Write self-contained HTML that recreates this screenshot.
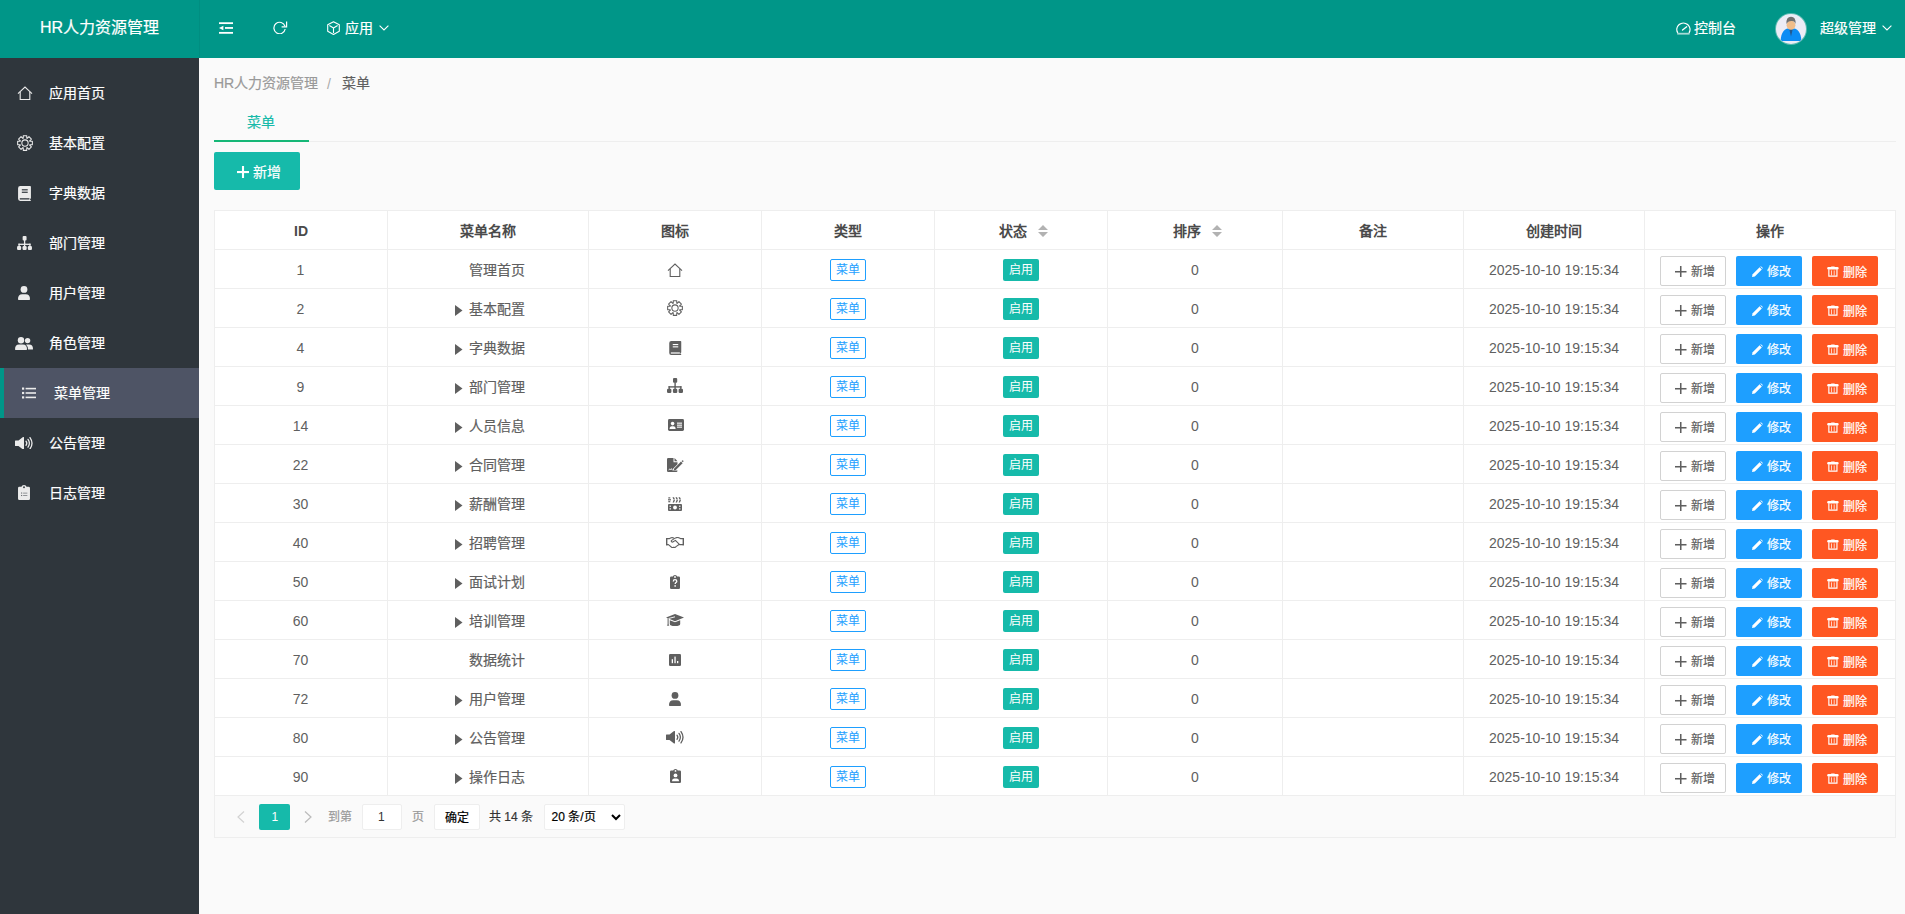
<!DOCTYPE html><html lang="zh-CN"><head><meta charset="utf-8"><style>html,body{margin:0;padding:0;width:1905px;height:914px;overflow:hidden;background:#fafafa;font-family:"Liberation Sans",sans-serif;}svg{display:block}</style></head><body><div style="position:absolute;left:0px;top:0px;width:1905px;height:58px;background:#009688;"></div>
<div style="position:absolute;left:199px;top:0px;width:1px;height:58px;background:rgba(0,0,0,0.05);"></div>
<div style="position:absolute;left:40px;top:19px;font-size:16px;line-height:18px;color:#fff;font-weight:normal;white-space:nowrap;-webkit-text-stroke:0.2px currentColor;">HR人力资源管理</div>
<svg style="position:absolute;left:219px;top:22px" width="14" height="12" viewBox="0 0 14 11.5" fill="#fff" ><rect x="0" y="0" width="14" height="1.8"/><rect x="6" y="4.8" width="8" height="1.8"/><rect x="0" y="9.7" width="14" height="1.8"/><path d="M0 5.7 L4.4 3.4 V8Z"/></svg>
<svg style="position:absolute;left:273px;top:21px" width="15" height="13" viewBox="0 0 15 13" fill="#fff" ><path d="M12 5.2 A5.7 5.7 0 1 0 12.2 8" fill="none" stroke="#fff" stroke-width="1.2"/><path d="M13.6 0.6 V5.8 H8.6" fill="none" stroke="#fff" stroke-width="1.2"/></svg>
<svg style="position:absolute;left:327px;top:20.5px" width="13" height="14" viewBox="0 0 13 14" fill="#fff" ><g fill="none" stroke="#fff" stroke-width="1.1" stroke-linejoin="round"><path d="M6.5 0.7 L12.3 3.8 V10.3 L6.5 13.4 L0.7 10.3 V3.8Z"/><path d="M2.4 4.6 L6.5 6.9 L10.6 4.6 M6.5 6.9 V12"/></g></svg>
<div style="position:absolute;left:345px;top:20px;font-size:14px;line-height:16px;color:#fff;font-weight:normal;white-space:nowrap;-webkit-text-stroke:0.2px currentColor;">应用</div>
<svg style="position:absolute;left:379px;top:24.5px" width="10" height="6" viewBox="0 0 10 6" fill="#fff" ><path d="M0.6 0.6 L5 5 L9.4 0.6" fill="none" stroke="#fff" stroke-width="1.1"/></svg>
<svg style="position:absolute;left:1676px;top:21.5px" width="15" height="13" viewBox="0 0 15 13" fill="#fff" ><path d="M1.74 10.9 A6.55 6.55 0 1 1 13.06 10.9" fill="none" stroke="#fff" stroke-width="1.3"/><rect x="1.2" y="10.8" width="12.4" height="1.8" fill="#fff" opacity="0.65"/><path d="M6.5 8.1 L10.7 4.8" stroke="#fff" stroke-width="1.3" stroke-linecap="round"/></svg>
<div style="position:absolute;left:1694px;top:20px;font-size:14px;line-height:16px;color:#fff;font-weight:normal;white-space:nowrap;-webkit-text-stroke:0.2px currentColor;">控制台</div>
<svg style="position:absolute;left:1774px;top:12px" width="34" height="34" viewBox="0 0 34 34"><circle cx="17" cy="17" r="16" fill="#fff" opacity="0.35"/><circle cx="17" cy="17" r="15" fill="#ececf6"/><clipPath id="av"><circle cx="17" cy="17" r="15"/></clipPath><g clip-path="url(#av)"><path d="M6.7 29 C6.7 20.5 10.5 16 17 16 C23.5 16 27.3 20.5 27.3 29Z" fill="#0b8cf4"/><path d="M15 16.3 L17 24.5 L19 16.3Z" fill="#24598f"/><ellipse cx="17" cy="13.2" rx="4.4" ry="4.5" fill="#f0bd8b"/><path d="M12.4 12 Q12 4.8 17 4.8 Q22 4.8 21.6 12 Q20.5 8.6 17.6 8.9 Q14.2 8.6 12.4 12Z" fill="#707070"/></g></svg>
<div style="position:absolute;left:1820px;top:19.5px;font-size:14px;line-height:16px;color:#fff;font-weight:normal;white-space:nowrap;-webkit-text-stroke:0.2px currentColor;">超级管理</div>
<svg style="position:absolute;left:1882px;top:25px" width="10" height="6" viewBox="0 0 10 6" fill="#fff" ><path d="M0.6 0.6 L5 5 L9.4 0.6" fill="none" stroke="#fff" stroke-width="1.1"/></svg>
<div style="position:absolute;left:0px;top:58px;width:199px;height:856px;background:#2f363c;"></div>
<svg style="position:absolute;left:16.5px;top:85.5px" width="16" height="14.5" viewBox="0 0 16 14.5" fill="#ebebeb" ><path d="M1 7.6 L8 1 L15 7.6" fill="none" stroke="#ebebeb" stroke-width="1.1" stroke-linejoin="miter"/><path d="M3.2 6 V13.5 H12.8 V6" fill="none" stroke="#ebebeb" stroke-width="1.1"/></svg>
<div style="position:absolute;left:49px;top:85px;font-size:14px;line-height:16px;color:#fff;font-weight:normal;white-space:nowrap;-webkit-text-stroke:0.2px currentColor;">应用首页</div>
<svg style="position:absolute;left:16.5px;top:135px" width="16" height="16" viewBox="0 0 16 16" fill="#ebebeb" ><path d="M6.25 3.21 L6.25 0.65 L9.75 0.65 L9.75 3.21 L10.15 3.38 L11.96 1.57 L14.43 4.04 L12.62 5.85 L12.79 6.25 L15.35 6.25 L15.35 9.75 L12.79 9.75 L12.62 10.15 L14.43 11.96 L11.96 14.43 L10.15 12.62 L9.75 12.79 L9.75 15.35 L6.25 15.35 L6.25 12.79 L5.85 12.62 L4.04 14.43 L1.57 11.96 L3.38 10.15 L3.21 9.75 L0.65 9.75 L0.65 6.25 L3.21 6.25 L3.38 5.85 L1.57 4.04 L4.04 1.57 L5.85 3.38Z" fill="none" stroke="#ebebeb" stroke-width="1.05" stroke-linejoin="round"/><circle cx="8" cy="8" r="3.15" fill="none" stroke="#ebebeb" stroke-width="1.05"/></svg>
<div style="position:absolute;left:49px;top:135px;font-size:14px;line-height:16px;color:#fff;font-weight:normal;white-space:nowrap;-webkit-text-stroke:0.2px currentColor;">基本配置</div>
<svg style="position:absolute;left:18px;top:185.5px" width="13" height="15" viewBox="0 0 12 14" fill="#ebebeb" ><path d="M2 0 H11.2 Q12 0 12 0.8 V11.2 Q12 12 11.2 12 V12.8 Q12 12.8 12 13.4 Q12 14 11.4 14 H2 Q0 14 0 12 V2 Q0 0 2 0Z" fill="#ebebeb"/><rect x="3.5" y="3" width="5.5" height="1.1" fill="#2f363c"/><rect x="3.5" y="5.3" width="5.5" height="1.1" fill="#2f363c"/><rect x="1.6" y="11.4" width="9" height="1.2" fill="#2f363c"/></svg>
<div style="position:absolute;left:49px;top:185px;font-size:14px;line-height:16px;color:#fff;font-weight:normal;white-space:nowrap;-webkit-text-stroke:0.2px currentColor;">字典数据</div>
<svg style="position:absolute;left:15.8px;top:235.5px" width="17" height="14" viewBox="0 0 16 15" fill="#ebebeb" ><rect x="6" y="0" width="4.2" height="4.8" rx="1.1" fill="#ebebeb"/><rect x="7.4" y="4.2" width="1.4" height="4.8" fill="#ebebeb"/><rect x="1.5" y="8.2" width="13" height="1.4" fill="#ebebeb"/><rect x="1.5" y="8.2" width="1.4" height="3" fill="#ebebeb"/><rect x="13.1" y="8.2" width="1.4" height="3" fill="#ebebeb"/><rect x="7.4" y="8.2" width="1.4" height="3" fill="#ebebeb"/><rect x="0" y="10.8" width="4.4" height="4.2" rx="1.2" fill="#ebebeb"/><rect x="5.9" y="10.8" width="4.4" height="4.2" rx="1.2" fill="#ebebeb"/><rect x="11.6" y="10.8" width="4.4" height="4.2" rx="1.2" fill="#ebebeb"/></svg>
<div style="position:absolute;left:49px;top:235px;font-size:14px;line-height:16px;color:#fff;font-weight:normal;white-space:nowrap;-webkit-text-stroke:0.2px currentColor;">部门管理</div>
<svg style="position:absolute;left:18px;top:286px" width="12" height="14" viewBox="0 0 12 14" fill="#ebebeb" ><circle cx="6" cy="3.4" r="3.4" fill="#ebebeb"/><path d="M0 13.2 Q0 8.2 4.2 8.2 H7.8 Q12 8.2 12 13.2 Q12 14 11.2 14 H0.8 Q0 14 0 13.2Z" fill="#ebebeb"/></svg>
<div style="position:absolute;left:49px;top:285px;font-size:14px;line-height:16px;color:#fff;font-weight:normal;white-space:nowrap;-webkit-text-stroke:0.2px currentColor;">用户管理</div>
<svg style="position:absolute;left:15px;top:336.5px" width="18" height="13" viewBox="0 0 18 13" fill="#ebebeb" ><circle cx="6" cy="3.3" r="3.2" fill="#ebebeb"/><path d="M0 12.3 Q0 7.6 4 7.6 H8 Q12 7.6 12 12.3 Q12 13 11.3 13 H0.7 Q0 13 0 12.3Z" fill="#ebebeb"/><circle cx="12.6" cy="3.6" r="2.7" fill="#ebebeb"/><path d="M11 7.6 H14 Q18 7.6 18 12 Q18 12.6 17.4 12.6 H13 Q13 9.5 11 7.6Z" fill="#ebebeb"/></svg>
<div style="position:absolute;left:49px;top:335px;font-size:14px;line-height:16px;color:#fff;font-weight:normal;white-space:nowrap;-webkit-text-stroke:0.2px currentColor;">角色管理</div>
<div style="position:absolute;left:0px;top:368px;width:199px;height:50px;background:#4e5465;"></div>
<div style="position:absolute;left:0px;top:368px;width:4px;height:50px;background:#009688;"></div>
<svg style="position:absolute;left:22px;top:387px" width="14" height="12" viewBox="0 0 14 11" fill="#ebebeb" ><rect x="0" y="0" width="2.2" height="2.2" fill="#ebebeb"/><rect x="0" y="4.4" width="2.2" height="2.2" fill="#ebebeb"/><rect x="0" y="8.8" width="2.2" height="2.2" fill="#ebebeb"/><rect x="3.6" y="0.3" width="10.4" height="1.6" fill="#ebebeb"/><rect x="3.6" y="4.7" width="10.4" height="1.6" fill="#ebebeb"/><rect x="3.6" y="9.1" width="10.4" height="1.6" fill="#ebebeb"/></svg>
<div style="position:absolute;left:54px;top:385px;font-size:14px;line-height:16px;color:#fff;font-weight:normal;white-space:nowrap;-webkit-text-stroke:0.2px currentColor;">菜单管理</div>
<svg style="position:absolute;left:15px;top:436.5px" width="18" height="12.5" viewBox="0 0 18 12.5" fill="#ebebeb" ><path d="M0 4 Q0 3.5 0.5 3.5 H3.5 L8 0 Q9 -0.3 9 0.8 V11.7 Q9 12.8 8 12.5 L3.5 9 H0.5 Q0 9 0 8.5Z" fill="#ebebeb"/><path d="M11 4.2 Q12.6 6.25 11 8.3" fill="none" stroke="#ebebeb" stroke-width="1.3" stroke-linecap="round"/><path d="M13 2.4 Q15.8 6.25 13 10.1" fill="none" stroke="#ebebeb" stroke-width="1.3" stroke-linecap="round"/><path d="M15 0.6 Q19 6.25 15 11.9" fill="none" stroke="#ebebeb" stroke-width="1.3" stroke-linecap="round"/></svg>
<div style="position:absolute;left:49px;top:435px;font-size:14px;line-height:16px;color:#fff;font-weight:normal;white-space:nowrap;-webkit-text-stroke:0.2px currentColor;">公告管理</div>
<svg style="position:absolute;left:18.2px;top:485.3px" width="12" height="15" viewBox="0 0 11.8 14.8" fill="#ebebeb" ><path d="M1.3 1.8 H3.4 Q3.8 0 5.9 0 Q8 0 8.4 1.8 H10.5 Q11.8 1.8 11.8 3.1 V13.5 Q11.8 14.8 10.5 14.8 H1.3 Q0 14.8 0 13.5 V3.1 Q0 1.8 1.3 1.8Z" fill="#ebebeb"/><circle cx="5.9" cy="2.2" r="0.9" fill="#2f363c"/><rect x="3" y="7.4" width="1.1" height="1.1" fill="#2f363c" opacity="0.7"/><rect x="5" y="7.6" width="4.2" height="0.8" fill="#2f363c" opacity="0.6"/><rect x="3" y="9.8" width="1.1" height="1.1" fill="#2f363c" opacity="0.7"/><rect x="5" y="10" width="4.2" height="0.8" fill="#2f363c" opacity="0.6"/></svg>
<div style="position:absolute;left:49px;top:485px;font-size:14px;line-height:16px;color:#fff;font-weight:normal;white-space:nowrap;-webkit-text-stroke:0.2px currentColor;">日志管理</div>
<div style="position:absolute;left:199px;top:58px;width:1706px;height:856px;background:#fafafa;"></div>
<div style="position:absolute;left:214px;top:75px;font-size:14px;line-height:16px;color:#999;font-weight:normal;white-space:nowrap;-webkit-text-stroke:0.2px currentColor;">HR人力资源管理</div>
<div style="position:absolute;left:327px;top:75.5px;font-size:14px;line-height:16px;color:#aaa;font-weight:normal;white-space:nowrap;">/</div>
<div style="position:absolute;left:342px;top:75px;font-size:14px;line-height:16px;color:#5f5f5f;font-weight:normal;white-space:nowrap;-webkit-text-stroke:0.2px currentColor;">菜单</div>
<div style="position:absolute;left:247px;top:114px;font-size:14px;line-height:16px;color:#16baaa;font-weight:normal;white-space:nowrap;-webkit-text-stroke:0.2px currentColor;">菜单</div>
<div style="position:absolute;left:214px;top:141px;width:1682px;height:1px;background:#eeeeee;"></div>
<div style="position:absolute;left:214px;top:139.5px;width:95px;height:2px;background:#16b777;"></div>
<div style="position:absolute;left:214px;top:152px;width:86px;height:38px;background:#16baaa;border-radius:2px"></div>
<svg style="position:absolute;left:237px;top:166px" width="12" height="12" viewBox="0 0 12 12" fill="#fff" ><rect x="0" y="5" width="12" height="2.1" fill="#fff"/><rect x="4.95" y="0" width="2.1" height="12" fill="#fff"/></svg>
<div style="position:absolute;left:253px;top:164px;font-size:14px;line-height:16px;color:#fff;font-weight:normal;white-space:nowrap;-webkit-text-stroke:0.2px currentColor;">新增</div>
<div style="position:absolute;left:214px;top:210px;width:1682px;height:628px;background:#fff;"></div>
<div style="position:absolute;left:214px;top:210px;width:1682px;height:1px;background:#eeeeee;"></div>
<div style="position:absolute;left:214px;top:249px;width:1682px;height:1px;background:#eeeeee;"></div>
<div style="position:absolute;left:214px;top:288px;width:1682px;height:1px;background:#eeeeee;"></div>
<div style="position:absolute;left:214px;top:327px;width:1682px;height:1px;background:#eeeeee;"></div>
<div style="position:absolute;left:214px;top:366px;width:1682px;height:1px;background:#eeeeee;"></div>
<div style="position:absolute;left:214px;top:405px;width:1682px;height:1px;background:#eeeeee;"></div>
<div style="position:absolute;left:214px;top:444px;width:1682px;height:1px;background:#eeeeee;"></div>
<div style="position:absolute;left:214px;top:483px;width:1682px;height:1px;background:#eeeeee;"></div>
<div style="position:absolute;left:214px;top:522px;width:1682px;height:1px;background:#eeeeee;"></div>
<div style="position:absolute;left:214px;top:561px;width:1682px;height:1px;background:#eeeeee;"></div>
<div style="position:absolute;left:214px;top:600px;width:1682px;height:1px;background:#eeeeee;"></div>
<div style="position:absolute;left:214px;top:639px;width:1682px;height:1px;background:#eeeeee;"></div>
<div style="position:absolute;left:214px;top:678px;width:1682px;height:1px;background:#eeeeee;"></div>
<div style="position:absolute;left:214px;top:717px;width:1682px;height:1px;background:#eeeeee;"></div>
<div style="position:absolute;left:214px;top:756px;width:1682px;height:1px;background:#eeeeee;"></div>
<div style="position:absolute;left:214px;top:795px;width:1682px;height:1px;background:#eeeeee;"></div>
<div style="position:absolute;left:214px;top:210px;width:1px;height:586px;background:#eeeeee;"></div>
<div style="position:absolute;left:387px;top:210px;width:1px;height:586px;background:#eeeeee;"></div>
<div style="position:absolute;left:588px;top:210px;width:1px;height:586px;background:#eeeeee;"></div>
<div style="position:absolute;left:761px;top:210px;width:1px;height:586px;background:#eeeeee;"></div>
<div style="position:absolute;left:934px;top:210px;width:1px;height:586px;background:#eeeeee;"></div>
<div style="position:absolute;left:1107px;top:210px;width:1px;height:586px;background:#eeeeee;"></div>
<div style="position:absolute;left:1282px;top:210px;width:1px;height:586px;background:#eeeeee;"></div>
<div style="position:absolute;left:1463px;top:210px;width:1px;height:586px;background:#eeeeee;"></div>
<div style="position:absolute;left:1644px;top:210px;width:1px;height:586px;background:#eeeeee;"></div>
<div style="position:absolute;left:1895px;top:210px;width:1px;height:586px;background:#eeeeee;"></div>
<div style="position:absolute;left:214px;top:796px;width:1682px;height:41px;background:#fafafa;"></div>
<div style="position:absolute;left:214px;top:837px;width:1682px;height:1px;background:#eeeeee;"></div>
<div style="position:absolute;left:214px;top:796px;width:1px;height:42px;background:#eeeeee;"></div>
<div style="position:absolute;left:1895px;top:796px;width:1px;height:42px;background:#eeeeee;"></div>
<div style="position:absolute;left:294.0px;top:223px;font-size:14px;line-height:16px;color:#4a4a4a;font-weight:bold;white-space:nowrap;">ID</div>
<div style="position:absolute;left:460.0px;top:223px;font-size:14px;line-height:16px;color:#4a4a4a;font-weight:bold;white-space:nowrap;">菜单名称</div>
<div style="position:absolute;left:661.0px;top:223px;font-size:14px;line-height:16px;color:#4a4a4a;font-weight:bold;white-space:nowrap;">图标</div>
<div style="position:absolute;left:834.0px;top:223px;font-size:14px;line-height:16px;color:#4a4a4a;font-weight:bold;white-space:nowrap;">类型</div>
<div style="position:absolute;left:999.0px;top:223px;font-size:14px;line-height:16px;color:#4a4a4a;font-weight:bold;white-space:nowrap;">状态</div>
<svg style="position:absolute;left:1038.0px;top:225px" width="10" height="12" viewBox="0 0 10 12"><path d="M5 0 L10 5 H0Z M5 12 L10 7 H0Z" fill="#b2b2b2"/></svg>
<div style="position:absolute;left:1173.0px;top:223px;font-size:14px;line-height:16px;color:#4a4a4a;font-weight:bold;white-space:nowrap;">排序</div>
<svg style="position:absolute;left:1212.0px;top:225px" width="10" height="12" viewBox="0 0 10 12"><path d="M5 0 L10 5 H0Z M5 12 L10 7 H0Z" fill="#b2b2b2"/></svg>
<div style="position:absolute;left:1359.0px;top:223px;font-size:14px;line-height:16px;color:#4a4a4a;font-weight:bold;white-space:nowrap;">备注</div>
<div style="position:absolute;left:1526.0px;top:223px;font-size:14px;line-height:16px;color:#4a4a4a;font-weight:bold;white-space:nowrap;">创建时间</div>
<div style="position:absolute;left:1756.0px;top:223px;font-size:14px;line-height:16px;color:#4a4a4a;font-weight:bold;white-space:nowrap;">操作</div>
<div style="position:absolute;left:296.6px;top:262px;font-size:14px;line-height:16px;color:#5f5f5f;font-weight:normal;white-space:nowrap;">1</div>
<div style="position:absolute;left:469px;top:262px;font-size:14px;line-height:16px;color:#5f5f5f;font-weight:normal;white-space:nowrap;-webkit-text-stroke:0.2px currentColor;">管理首页</div>
<svg style="position:absolute;left:667px;top:262.5px" width="16" height="14.5" viewBox="0 0 16 14.5" fill="#5f5f5f" ><path d="M1 7.6 L8 1 L15 7.6" fill="none" stroke="#5f5f5f" stroke-width="1.1" stroke-linejoin="miter"/><path d="M3.2 6 V13.5 H12.8 V6" fill="none" stroke="#5f5f5f" stroke-width="1.1"/></svg>
<div style="position:absolute;left:830px;top:259px;width:34px;height:20px;border:1px solid #1e9fff;border-radius:2px;color:#1e9fff;font-size:12px;line-height:21px;text-align:center;white-space:nowrap">菜单</div>
<div style="position:absolute;left:1003px;top:259px;width:36px;height:22px;background:#16baaa;border-radius:2px;color:#fff;font-size:12px;line-height:23px;text-align:center;white-space:nowrap">启用</div>
<div style="position:absolute;left:1191px;top:262px;font-size:14px;line-height:16px;color:#5f5f5f;font-weight:normal;white-space:nowrap;">0</div>
<div style="position:absolute;left:1489px;top:262px;font-size:14px;line-height:16px;color:#5f5f5f;font-weight:normal;white-space:nowrap;">2025-10-10 19:15:34</div>
<div style="position:absolute;left:1660px;top:256px;width:64px;height:28px;border:1px solid #d2d2d2;border-radius:2px;background:#fff"></div>
<svg style="position:absolute;left:1675px;top:265.5px" width="11.5" height="11.5" viewBox="0 0 12 12" fill="#5f5f5f" ><rect x="0" y="5.2" width="12" height="1.6" fill="#5f5f5f"/><rect x="5.2" y="0" width="1.6" height="12" fill="#5f5f5f"/></svg>
<div style="position:absolute;left:1690.5px;top:265px;font-size:12px;line-height:14px;color:#5f5f5f;font-weight:normal;white-space:nowrap;-webkit-text-stroke:0.2px currentColor;">新增</div>
<div style="position:absolute;left:1736px;top:256px;width:66px;height:30px;background:#1e9fff;border-radius:2px"></div>
<svg style="position:absolute;left:1752px;top:266.2px" width="11" height="11" viewBox="0 0 11 11" fill="#fff" ><path d="M0 11 L0.6 8.2 L7.6 1.2 L9.8 3.4 L2.8 10.4Z" fill="#fff"/><path d="M8.4 0.4 Q8.8 0 9.2 0.4 L10.6 1.8 Q11 2.2 10.6 2.6 L10.4 2.8 L8.2 0.6Z" fill="#fff"/></svg>
<div style="position:absolute;left:1767px;top:265px;font-size:12px;line-height:14px;color:#fff;font-weight:normal;white-space:nowrap;-webkit-text-stroke:0.2px currentColor;">修改</div>
<div style="position:absolute;left:1812px;top:256px;width:66px;height:30px;background:#ff5722;border-radius:2px"></div>
<svg style="position:absolute;left:1827px;top:265.8px" width="12" height="11" viewBox="0 0 12 11" fill="#fff" ><rect x="0.2" y="0.9" width="11.4" height="2.6" rx="1.2" fill="#fff"/><rect x="4" y="0.4" width="3.8" height="1" rx="0.5" fill="#fff"/><path d="M1.85 3.2 V10.05 H9.95 V3.2" fill="none" stroke="#fff" stroke-width="1.15"/><rect x="4.1" y="4.4" width="0.85" height="5" fill="#fff" opacity="0.85"/><rect x="6.75" y="4.4" width="0.85" height="5" fill="#fff" opacity="0.85"/></svg>
<div style="position:absolute;left:1842.5px;top:265.5px;font-size:12px;line-height:14px;color:#fff;font-weight:normal;white-space:nowrap;-webkit-text-stroke:0.2px currentColor;">删除</div>
<div style="position:absolute;left:296.6px;top:301px;font-size:14px;line-height:16px;color:#5f5f5f;font-weight:normal;white-space:nowrap;">2</div>
<svg style="position:absolute;left:455px;top:304.5px" width="8" height="11" viewBox="0 0 8 11"><path d="M0 0 L7.5 5.5 L0 11Z" fill="#5f5f5f"/></svg>
<div style="position:absolute;left:469px;top:301px;font-size:14px;line-height:16px;color:#5f5f5f;font-weight:normal;white-space:nowrap;-webkit-text-stroke:0.2px currentColor;">基本配置</div>
<svg style="position:absolute;left:667px;top:300px" width="16" height="16" viewBox="0 0 16 16" fill="#5f5f5f" ><path d="M6.25 3.21 L6.25 0.65 L9.75 0.65 L9.75 3.21 L10.15 3.38 L11.96 1.57 L14.43 4.04 L12.62 5.85 L12.79 6.25 L15.35 6.25 L15.35 9.75 L12.79 9.75 L12.62 10.15 L14.43 11.96 L11.96 14.43 L10.15 12.62 L9.75 12.79 L9.75 15.35 L6.25 15.35 L6.25 12.79 L5.85 12.62 L4.04 14.43 L1.57 11.96 L3.38 10.15 L3.21 9.75 L0.65 9.75 L0.65 6.25 L3.21 6.25 L3.38 5.85 L1.57 4.04 L4.04 1.57 L5.85 3.38Z" fill="none" stroke="#5f5f5f" stroke-width="1.05" stroke-linejoin="round"/><circle cx="8" cy="8" r="3.15" fill="none" stroke="#5f5f5f" stroke-width="1.05"/></svg>
<div style="position:absolute;left:830px;top:298px;width:34px;height:20px;border:1px solid #1e9fff;border-radius:2px;color:#1e9fff;font-size:12px;line-height:21px;text-align:center;white-space:nowrap">菜单</div>
<div style="position:absolute;left:1003px;top:298px;width:36px;height:22px;background:#16baaa;border-radius:2px;color:#fff;font-size:12px;line-height:23px;text-align:center;white-space:nowrap">启用</div>
<div style="position:absolute;left:1191px;top:301px;font-size:14px;line-height:16px;color:#5f5f5f;font-weight:normal;white-space:nowrap;">0</div>
<div style="position:absolute;left:1489px;top:301px;font-size:14px;line-height:16px;color:#5f5f5f;font-weight:normal;white-space:nowrap;">2025-10-10 19:15:34</div>
<div style="position:absolute;left:1660px;top:295px;width:64px;height:28px;border:1px solid #d2d2d2;border-radius:2px;background:#fff"></div>
<svg style="position:absolute;left:1675px;top:304.5px" width="11.5" height="11.5" viewBox="0 0 12 12" fill="#5f5f5f" ><rect x="0" y="5.2" width="12" height="1.6" fill="#5f5f5f"/><rect x="5.2" y="0" width="1.6" height="12" fill="#5f5f5f"/></svg>
<div style="position:absolute;left:1690.5px;top:304px;font-size:12px;line-height:14px;color:#5f5f5f;font-weight:normal;white-space:nowrap;-webkit-text-stroke:0.2px currentColor;">新增</div>
<div style="position:absolute;left:1736px;top:295px;width:66px;height:30px;background:#1e9fff;border-radius:2px"></div>
<svg style="position:absolute;left:1752px;top:305.2px" width="11" height="11" viewBox="0 0 11 11" fill="#fff" ><path d="M0 11 L0.6 8.2 L7.6 1.2 L9.8 3.4 L2.8 10.4Z" fill="#fff"/><path d="M8.4 0.4 Q8.8 0 9.2 0.4 L10.6 1.8 Q11 2.2 10.6 2.6 L10.4 2.8 L8.2 0.6Z" fill="#fff"/></svg>
<div style="position:absolute;left:1767px;top:304px;font-size:12px;line-height:14px;color:#fff;font-weight:normal;white-space:nowrap;-webkit-text-stroke:0.2px currentColor;">修改</div>
<div style="position:absolute;left:1812px;top:295px;width:66px;height:30px;background:#ff5722;border-radius:2px"></div>
<svg style="position:absolute;left:1827px;top:304.8px" width="12" height="11" viewBox="0 0 12 11" fill="#fff" ><rect x="0.2" y="0.9" width="11.4" height="2.6" rx="1.2" fill="#fff"/><rect x="4" y="0.4" width="3.8" height="1" rx="0.5" fill="#fff"/><path d="M1.85 3.2 V10.05 H9.95 V3.2" fill="none" stroke="#fff" stroke-width="1.15"/><rect x="4.1" y="4.4" width="0.85" height="5" fill="#fff" opacity="0.85"/><rect x="6.75" y="4.4" width="0.85" height="5" fill="#fff" opacity="0.85"/></svg>
<div style="position:absolute;left:1842.5px;top:304.5px;font-size:12px;line-height:14px;color:#fff;font-weight:normal;white-space:nowrap;-webkit-text-stroke:0.2px currentColor;">删除</div>
<div style="position:absolute;left:296.6px;top:340px;font-size:14px;line-height:16px;color:#5f5f5f;font-weight:normal;white-space:nowrap;">4</div>
<svg style="position:absolute;left:455px;top:343.5px" width="8" height="11" viewBox="0 0 8 11"><path d="M0 0 L7.5 5.5 L0 11Z" fill="#5f5f5f"/></svg>
<div style="position:absolute;left:469px;top:340px;font-size:14px;line-height:16px;color:#5f5f5f;font-weight:normal;white-space:nowrap;-webkit-text-stroke:0.2px currentColor;">字典数据</div>
<svg style="position:absolute;left:669px;top:340.5px" width="12.5" height="14" viewBox="0 0 12 14" fill="#5f5f5f" ><path d="M2 0 H11.2 Q12 0 12 0.8 V11.2 Q12 12 11.2 12 V12.8 Q12 12.8 12 13.4 Q12 14 11.4 14 H2 Q0 14 0 12 V2 Q0 0 2 0Z" fill="#5f5f5f"/><rect x="3.5" y="3" width="5.5" height="1.1" fill="#fff"/><rect x="3.5" y="5.3" width="5.5" height="1.1" fill="#fff"/><rect x="1.6" y="11.4" width="9" height="1.2" fill="#fff"/></svg>
<div style="position:absolute;left:830px;top:337px;width:34px;height:20px;border:1px solid #1e9fff;border-radius:2px;color:#1e9fff;font-size:12px;line-height:21px;text-align:center;white-space:nowrap">菜单</div>
<div style="position:absolute;left:1003px;top:337px;width:36px;height:22px;background:#16baaa;border-radius:2px;color:#fff;font-size:12px;line-height:23px;text-align:center;white-space:nowrap">启用</div>
<div style="position:absolute;left:1191px;top:340px;font-size:14px;line-height:16px;color:#5f5f5f;font-weight:normal;white-space:nowrap;">0</div>
<div style="position:absolute;left:1489px;top:340px;font-size:14px;line-height:16px;color:#5f5f5f;font-weight:normal;white-space:nowrap;">2025-10-10 19:15:34</div>
<div style="position:absolute;left:1660px;top:334px;width:64px;height:28px;border:1px solid #d2d2d2;border-radius:2px;background:#fff"></div>
<svg style="position:absolute;left:1675px;top:343.5px" width="11.5" height="11.5" viewBox="0 0 12 12" fill="#5f5f5f" ><rect x="0" y="5.2" width="12" height="1.6" fill="#5f5f5f"/><rect x="5.2" y="0" width="1.6" height="12" fill="#5f5f5f"/></svg>
<div style="position:absolute;left:1690.5px;top:343px;font-size:12px;line-height:14px;color:#5f5f5f;font-weight:normal;white-space:nowrap;-webkit-text-stroke:0.2px currentColor;">新增</div>
<div style="position:absolute;left:1736px;top:334px;width:66px;height:30px;background:#1e9fff;border-radius:2px"></div>
<svg style="position:absolute;left:1752px;top:344.2px" width="11" height="11" viewBox="0 0 11 11" fill="#fff" ><path d="M0 11 L0.6 8.2 L7.6 1.2 L9.8 3.4 L2.8 10.4Z" fill="#fff"/><path d="M8.4 0.4 Q8.8 0 9.2 0.4 L10.6 1.8 Q11 2.2 10.6 2.6 L10.4 2.8 L8.2 0.6Z" fill="#fff"/></svg>
<div style="position:absolute;left:1767px;top:343px;font-size:12px;line-height:14px;color:#fff;font-weight:normal;white-space:nowrap;-webkit-text-stroke:0.2px currentColor;">修改</div>
<div style="position:absolute;left:1812px;top:334px;width:66px;height:30px;background:#ff5722;border-radius:2px"></div>
<svg style="position:absolute;left:1827px;top:343.8px" width="12" height="11" viewBox="0 0 12 11" fill="#fff" ><rect x="0.2" y="0.9" width="11.4" height="2.6" rx="1.2" fill="#fff"/><rect x="4" y="0.4" width="3.8" height="1" rx="0.5" fill="#fff"/><path d="M1.85 3.2 V10.05 H9.95 V3.2" fill="none" stroke="#fff" stroke-width="1.15"/><rect x="4.1" y="4.4" width="0.85" height="5" fill="#fff" opacity="0.85"/><rect x="6.75" y="4.4" width="0.85" height="5" fill="#fff" opacity="0.85"/></svg>
<div style="position:absolute;left:1842.5px;top:343.5px;font-size:12px;line-height:14px;color:#fff;font-weight:normal;white-space:nowrap;-webkit-text-stroke:0.2px currentColor;">删除</div>
<div style="position:absolute;left:296.6px;top:379px;font-size:14px;line-height:16px;color:#5f5f5f;font-weight:normal;white-space:nowrap;">9</div>
<svg style="position:absolute;left:455px;top:382.5px" width="8" height="11" viewBox="0 0 8 11"><path d="M0 0 L7.5 5.5 L0 11Z" fill="#5f5f5f"/></svg>
<div style="position:absolute;left:469px;top:379px;font-size:14px;line-height:16px;color:#5f5f5f;font-weight:normal;white-space:nowrap;-webkit-text-stroke:0.2px currentColor;">部门管理</div>
<svg style="position:absolute;left:667px;top:377.5px" width="16" height="15" viewBox="0 0 16 15" fill="#5f5f5f" ><rect x="6" y="0" width="4.2" height="4.8" rx="1.1" fill="#5f5f5f"/><rect x="7.4" y="4.2" width="1.4" height="4.8" fill="#5f5f5f"/><rect x="1.5" y="8.2" width="13" height="1.4" fill="#5f5f5f"/><rect x="1.5" y="8.2" width="1.4" height="3" fill="#5f5f5f"/><rect x="13.1" y="8.2" width="1.4" height="3" fill="#5f5f5f"/><rect x="7.4" y="8.2" width="1.4" height="3" fill="#5f5f5f"/><rect x="0" y="10.8" width="4.4" height="4.2" rx="1.2" fill="#5f5f5f"/><rect x="5.9" y="10.8" width="4.4" height="4.2" rx="1.2" fill="#5f5f5f"/><rect x="11.6" y="10.8" width="4.4" height="4.2" rx="1.2" fill="#5f5f5f"/></svg>
<div style="position:absolute;left:830px;top:376px;width:34px;height:20px;border:1px solid #1e9fff;border-radius:2px;color:#1e9fff;font-size:12px;line-height:21px;text-align:center;white-space:nowrap">菜单</div>
<div style="position:absolute;left:1003px;top:376px;width:36px;height:22px;background:#16baaa;border-radius:2px;color:#fff;font-size:12px;line-height:23px;text-align:center;white-space:nowrap">启用</div>
<div style="position:absolute;left:1191px;top:379px;font-size:14px;line-height:16px;color:#5f5f5f;font-weight:normal;white-space:nowrap;">0</div>
<div style="position:absolute;left:1489px;top:379px;font-size:14px;line-height:16px;color:#5f5f5f;font-weight:normal;white-space:nowrap;">2025-10-10 19:15:34</div>
<div style="position:absolute;left:1660px;top:373px;width:64px;height:28px;border:1px solid #d2d2d2;border-radius:2px;background:#fff"></div>
<svg style="position:absolute;left:1675px;top:382.5px" width="11.5" height="11.5" viewBox="0 0 12 12" fill="#5f5f5f" ><rect x="0" y="5.2" width="12" height="1.6" fill="#5f5f5f"/><rect x="5.2" y="0" width="1.6" height="12" fill="#5f5f5f"/></svg>
<div style="position:absolute;left:1690.5px;top:382px;font-size:12px;line-height:14px;color:#5f5f5f;font-weight:normal;white-space:nowrap;-webkit-text-stroke:0.2px currentColor;">新增</div>
<div style="position:absolute;left:1736px;top:373px;width:66px;height:30px;background:#1e9fff;border-radius:2px"></div>
<svg style="position:absolute;left:1752px;top:383.2px" width="11" height="11" viewBox="0 0 11 11" fill="#fff" ><path d="M0 11 L0.6 8.2 L7.6 1.2 L9.8 3.4 L2.8 10.4Z" fill="#fff"/><path d="M8.4 0.4 Q8.8 0 9.2 0.4 L10.6 1.8 Q11 2.2 10.6 2.6 L10.4 2.8 L8.2 0.6Z" fill="#fff"/></svg>
<div style="position:absolute;left:1767px;top:382px;font-size:12px;line-height:14px;color:#fff;font-weight:normal;white-space:nowrap;-webkit-text-stroke:0.2px currentColor;">修改</div>
<div style="position:absolute;left:1812px;top:373px;width:66px;height:30px;background:#ff5722;border-radius:2px"></div>
<svg style="position:absolute;left:1827px;top:382.8px" width="12" height="11" viewBox="0 0 12 11" fill="#fff" ><rect x="0.2" y="0.9" width="11.4" height="2.6" rx="1.2" fill="#fff"/><rect x="4" y="0.4" width="3.8" height="1" rx="0.5" fill="#fff"/><path d="M1.85 3.2 V10.05 H9.95 V3.2" fill="none" stroke="#fff" stroke-width="1.15"/><rect x="4.1" y="4.4" width="0.85" height="5" fill="#fff" opacity="0.85"/><rect x="6.75" y="4.4" width="0.85" height="5" fill="#fff" opacity="0.85"/></svg>
<div style="position:absolute;left:1842.5px;top:382.5px;font-size:12px;line-height:14px;color:#fff;font-weight:normal;white-space:nowrap;-webkit-text-stroke:0.2px currentColor;">删除</div>
<div style="position:absolute;left:292.7px;top:418px;font-size:14px;line-height:16px;color:#5f5f5f;font-weight:normal;white-space:nowrap;">14</div>
<svg style="position:absolute;left:455px;top:421.5px" width="8" height="11" viewBox="0 0 8 11"><path d="M0 0 L7.5 5.5 L0 11Z" fill="#5f5f5f"/></svg>
<div style="position:absolute;left:469px;top:418px;font-size:14px;line-height:16px;color:#5f5f5f;font-weight:normal;white-space:nowrap;-webkit-text-stroke:0.2px currentColor;">人员信息</div>
<svg style="position:absolute;left:667.5px;top:419px" width="16" height="12" viewBox="0 0 16 12" fill="#5f5f5f" ><rect x="0" y="0" width="16" height="12" rx="1.4" fill="#5f5f5f"/><circle cx="4.6" cy="4.6" r="1.8" fill="#fff"/><path d="M1.6 10 Q1.6 7.2 3.8 7.2 H5.4 Q7.6 7.2 7.6 10Z" fill="#fff"/><rect x="9" y="3.6" width="5" height="1.1" fill="#fff"/><rect x="9" y="5.6" width="5" height="1.1" fill="#fff"/><rect x="9" y="7.6" width="5" height="1.1" fill="#fff"/></svg>
<div style="position:absolute;left:830px;top:415px;width:34px;height:20px;border:1px solid #1e9fff;border-radius:2px;color:#1e9fff;font-size:12px;line-height:21px;text-align:center;white-space:nowrap">菜单</div>
<div style="position:absolute;left:1003px;top:415px;width:36px;height:22px;background:#16baaa;border-radius:2px;color:#fff;font-size:12px;line-height:23px;text-align:center;white-space:nowrap">启用</div>
<div style="position:absolute;left:1191px;top:418px;font-size:14px;line-height:16px;color:#5f5f5f;font-weight:normal;white-space:nowrap;">0</div>
<div style="position:absolute;left:1489px;top:418px;font-size:14px;line-height:16px;color:#5f5f5f;font-weight:normal;white-space:nowrap;">2025-10-10 19:15:34</div>
<div style="position:absolute;left:1660px;top:412px;width:64px;height:28px;border:1px solid #d2d2d2;border-radius:2px;background:#fff"></div>
<svg style="position:absolute;left:1675px;top:421.5px" width="11.5" height="11.5" viewBox="0 0 12 12" fill="#5f5f5f" ><rect x="0" y="5.2" width="12" height="1.6" fill="#5f5f5f"/><rect x="5.2" y="0" width="1.6" height="12" fill="#5f5f5f"/></svg>
<div style="position:absolute;left:1690.5px;top:421px;font-size:12px;line-height:14px;color:#5f5f5f;font-weight:normal;white-space:nowrap;-webkit-text-stroke:0.2px currentColor;">新增</div>
<div style="position:absolute;left:1736px;top:412px;width:66px;height:30px;background:#1e9fff;border-radius:2px"></div>
<svg style="position:absolute;left:1752px;top:422.2px" width="11" height="11" viewBox="0 0 11 11" fill="#fff" ><path d="M0 11 L0.6 8.2 L7.6 1.2 L9.8 3.4 L2.8 10.4Z" fill="#fff"/><path d="M8.4 0.4 Q8.8 0 9.2 0.4 L10.6 1.8 Q11 2.2 10.6 2.6 L10.4 2.8 L8.2 0.6Z" fill="#fff"/></svg>
<div style="position:absolute;left:1767px;top:421px;font-size:12px;line-height:14px;color:#fff;font-weight:normal;white-space:nowrap;-webkit-text-stroke:0.2px currentColor;">修改</div>
<div style="position:absolute;left:1812px;top:412px;width:66px;height:30px;background:#ff5722;border-radius:2px"></div>
<svg style="position:absolute;left:1827px;top:421.8px" width="12" height="11" viewBox="0 0 12 11" fill="#fff" ><rect x="0.2" y="0.9" width="11.4" height="2.6" rx="1.2" fill="#fff"/><rect x="4" y="0.4" width="3.8" height="1" rx="0.5" fill="#fff"/><path d="M1.85 3.2 V10.05 H9.95 V3.2" fill="none" stroke="#fff" stroke-width="1.15"/><rect x="4.1" y="4.4" width="0.85" height="5" fill="#fff" opacity="0.85"/><rect x="6.75" y="4.4" width="0.85" height="5" fill="#fff" opacity="0.85"/></svg>
<div style="position:absolute;left:1842.5px;top:421.5px;font-size:12px;line-height:14px;color:#fff;font-weight:normal;white-space:nowrap;-webkit-text-stroke:0.2px currentColor;">删除</div>
<div style="position:absolute;left:292.7px;top:457px;font-size:14px;line-height:16px;color:#5f5f5f;font-weight:normal;white-space:nowrap;">22</div>
<svg style="position:absolute;left:455px;top:460.5px" width="8" height="11" viewBox="0 0 8 11"><path d="M0 0 L7.5 5.5 L0 11Z" fill="#5f5f5f"/></svg>
<div style="position:absolute;left:469px;top:457px;font-size:14px;line-height:16px;color:#5f5f5f;font-weight:normal;white-space:nowrap;-webkit-text-stroke:0.2px currentColor;">合同管理</div>
<svg style="position:absolute;left:667px;top:458px" width="17" height="14" viewBox="0 0 17 14" fill="#5f5f5f" ><path d="M1.2 0 H6.5 V4.2 H10.5 V6.2 L6 10.8 L5.4 12.4 H10.5 V12.8 Q10.5 14 9.3 14 H1.2 Q0 14 0 12.8 V1.2 Q0 0 1.2 0Z" fill="#5f5f5f"/><path d="M7.5 0 L10.5 3.2 H7.5Z" fill="#5f5f5f"/><path d="M1.8 12.2 L2.8 10.8 L3.6 11.8 L4.5 10.6 L5 12" fill="none" stroke="#fff" stroke-width="0.8"/><path d="M7.2 10.4 L14 3.6 L15.6 5.2 L8.8 12 L6.6 12.6Z" fill="#5f5f5f"/><path d="M14.6 3 L15.2 2.4 Q15.6 2 16 2.4 L16.4 2.8 Q16.8 3.2 16.4 3.6 L15.8 4.2Z" fill="#5f5f5f"/></svg>
<div style="position:absolute;left:830px;top:454px;width:34px;height:20px;border:1px solid #1e9fff;border-radius:2px;color:#1e9fff;font-size:12px;line-height:21px;text-align:center;white-space:nowrap">菜单</div>
<div style="position:absolute;left:1003px;top:454px;width:36px;height:22px;background:#16baaa;border-radius:2px;color:#fff;font-size:12px;line-height:23px;text-align:center;white-space:nowrap">启用</div>
<div style="position:absolute;left:1191px;top:457px;font-size:14px;line-height:16px;color:#5f5f5f;font-weight:normal;white-space:nowrap;">0</div>
<div style="position:absolute;left:1489px;top:457px;font-size:14px;line-height:16px;color:#5f5f5f;font-weight:normal;white-space:nowrap;">2025-10-10 19:15:34</div>
<div style="position:absolute;left:1660px;top:451px;width:64px;height:28px;border:1px solid #d2d2d2;border-radius:2px;background:#fff"></div>
<svg style="position:absolute;left:1675px;top:460.5px" width="11.5" height="11.5" viewBox="0 0 12 12" fill="#5f5f5f" ><rect x="0" y="5.2" width="12" height="1.6" fill="#5f5f5f"/><rect x="5.2" y="0" width="1.6" height="12" fill="#5f5f5f"/></svg>
<div style="position:absolute;left:1690.5px;top:460px;font-size:12px;line-height:14px;color:#5f5f5f;font-weight:normal;white-space:nowrap;-webkit-text-stroke:0.2px currentColor;">新增</div>
<div style="position:absolute;left:1736px;top:451px;width:66px;height:30px;background:#1e9fff;border-radius:2px"></div>
<svg style="position:absolute;left:1752px;top:461.2px" width="11" height="11" viewBox="0 0 11 11" fill="#fff" ><path d="M0 11 L0.6 8.2 L7.6 1.2 L9.8 3.4 L2.8 10.4Z" fill="#fff"/><path d="M8.4 0.4 Q8.8 0 9.2 0.4 L10.6 1.8 Q11 2.2 10.6 2.6 L10.4 2.8 L8.2 0.6Z" fill="#fff"/></svg>
<div style="position:absolute;left:1767px;top:460px;font-size:12px;line-height:14px;color:#fff;font-weight:normal;white-space:nowrap;-webkit-text-stroke:0.2px currentColor;">修改</div>
<div style="position:absolute;left:1812px;top:451px;width:66px;height:30px;background:#ff5722;border-radius:2px"></div>
<svg style="position:absolute;left:1827px;top:460.8px" width="12" height="11" viewBox="0 0 12 11" fill="#fff" ><rect x="0.2" y="0.9" width="11.4" height="2.6" rx="1.2" fill="#fff"/><rect x="4" y="0.4" width="3.8" height="1" rx="0.5" fill="#fff"/><path d="M1.85 3.2 V10.05 H9.95 V3.2" fill="none" stroke="#fff" stroke-width="1.15"/><rect x="4.1" y="4.4" width="0.85" height="5" fill="#fff" opacity="0.85"/><rect x="6.75" y="4.4" width="0.85" height="5" fill="#fff" opacity="0.85"/></svg>
<div style="position:absolute;left:1842.5px;top:460.5px;font-size:12px;line-height:14px;color:#fff;font-weight:normal;white-space:nowrap;-webkit-text-stroke:0.2px currentColor;">删除</div>
<div style="position:absolute;left:292.7px;top:496px;font-size:14px;line-height:16px;color:#5f5f5f;font-weight:normal;white-space:nowrap;">30</div>
<svg style="position:absolute;left:455px;top:499.5px" width="8" height="11" viewBox="0 0 8 11"><path d="M0 0 L7.5 5.5 L0 11Z" fill="#5f5f5f"/></svg>
<div style="position:absolute;left:469px;top:496px;font-size:14px;line-height:16px;color:#5f5f5f;font-weight:normal;white-space:nowrap;-webkit-text-stroke:0.2px currentColor;">薪酬管理</div>
<svg style="position:absolute;left:668px;top:496.8px" width="14" height="14" viewBox="0 0 14 14" fill="#5f5f5f" ><g fill="#5f5f5f"><rect x="0.3" y="0.3" width="2" height="1.2"/><rect x="0" y="2.2" width="3" height="1.2"/><rect x="0.3" y="4.1" width="2" height="1.2"/><path d="M4.5 0.2 L6 0.2 L7 2.6 L5.5 2.6Z M4.6 5.4 L6 5.4 L7 2.9 L5.6 2.9Z"/><path d="M7.5 0.2 L9 0.2 L10 2.6 L8.5 2.6Z M7.6 5.4 L9 5.4 L10 2.9 L8.6 2.9Z"/><path d="M10.5 0.2 L12 0.2 L13 2.6 L11.5 2.6Z M10.6 5.4 L12 5.4 L13 2.9 L11.6 2.9Z"/><rect x="0" y="7" width="14" height="7" rx="1"/></g><circle cx="7" cy="10.5" r="1.9" fill="#fff"/><rect x="1.6" y="8.6" width="1.3" height="1.3" fill="#fff"/><rect x="1.6" y="11.2" width="1.3" height="1.3" fill="#fff"/><rect x="11.1" y="8.6" width="1.3" height="1.3" fill="#fff"/><rect x="11.1" y="11.2" width="1.3" height="1.3" fill="#fff"/></svg>
<div style="position:absolute;left:830px;top:493px;width:34px;height:20px;border:1px solid #1e9fff;border-radius:2px;color:#1e9fff;font-size:12px;line-height:21px;text-align:center;white-space:nowrap">菜单</div>
<div style="position:absolute;left:1003px;top:493px;width:36px;height:22px;background:#16baaa;border-radius:2px;color:#fff;font-size:12px;line-height:23px;text-align:center;white-space:nowrap">启用</div>
<div style="position:absolute;left:1191px;top:496px;font-size:14px;line-height:16px;color:#5f5f5f;font-weight:normal;white-space:nowrap;">0</div>
<div style="position:absolute;left:1489px;top:496px;font-size:14px;line-height:16px;color:#5f5f5f;font-weight:normal;white-space:nowrap;">2025-10-10 19:15:34</div>
<div style="position:absolute;left:1660px;top:490px;width:64px;height:28px;border:1px solid #d2d2d2;border-radius:2px;background:#fff"></div>
<svg style="position:absolute;left:1675px;top:499.5px" width="11.5" height="11.5" viewBox="0 0 12 12" fill="#5f5f5f" ><rect x="0" y="5.2" width="12" height="1.6" fill="#5f5f5f"/><rect x="5.2" y="0" width="1.6" height="12" fill="#5f5f5f"/></svg>
<div style="position:absolute;left:1690.5px;top:499px;font-size:12px;line-height:14px;color:#5f5f5f;font-weight:normal;white-space:nowrap;-webkit-text-stroke:0.2px currentColor;">新增</div>
<div style="position:absolute;left:1736px;top:490px;width:66px;height:30px;background:#1e9fff;border-radius:2px"></div>
<svg style="position:absolute;left:1752px;top:500.2px" width="11" height="11" viewBox="0 0 11 11" fill="#fff" ><path d="M0 11 L0.6 8.2 L7.6 1.2 L9.8 3.4 L2.8 10.4Z" fill="#fff"/><path d="M8.4 0.4 Q8.8 0 9.2 0.4 L10.6 1.8 Q11 2.2 10.6 2.6 L10.4 2.8 L8.2 0.6Z" fill="#fff"/></svg>
<div style="position:absolute;left:1767px;top:499px;font-size:12px;line-height:14px;color:#fff;font-weight:normal;white-space:nowrap;-webkit-text-stroke:0.2px currentColor;">修改</div>
<div style="position:absolute;left:1812px;top:490px;width:66px;height:30px;background:#ff5722;border-radius:2px"></div>
<svg style="position:absolute;left:1827px;top:499.8px" width="12" height="11" viewBox="0 0 12 11" fill="#fff" ><rect x="0.2" y="0.9" width="11.4" height="2.6" rx="1.2" fill="#fff"/><rect x="4" y="0.4" width="3.8" height="1" rx="0.5" fill="#fff"/><path d="M1.85 3.2 V10.05 H9.95 V3.2" fill="none" stroke="#fff" stroke-width="1.15"/><rect x="4.1" y="4.4" width="0.85" height="5" fill="#fff" opacity="0.85"/><rect x="6.75" y="4.4" width="0.85" height="5" fill="#fff" opacity="0.85"/></svg>
<div style="position:absolute;left:1842.5px;top:499.5px;font-size:12px;line-height:14px;color:#fff;font-weight:normal;white-space:nowrap;-webkit-text-stroke:0.2px currentColor;">删除</div>
<div style="position:absolute;left:292.7px;top:535px;font-size:14px;line-height:16px;color:#5f5f5f;font-weight:normal;white-space:nowrap;">40</div>
<svg style="position:absolute;left:455px;top:538.5px" width="8" height="11" viewBox="0 0 8 11"><path d="M0 0 L7.5 5.5 L0 11Z" fill="#5f5f5f"/></svg>
<div style="position:absolute;left:469px;top:535px;font-size:14px;line-height:16px;color:#5f5f5f;font-weight:normal;white-space:nowrap;-webkit-text-stroke:0.2px currentColor;">招聘管理</div>
<svg style="position:absolute;left:666px;top:537px" width="18" height="11" viewBox="0 0 18 11" fill="#5f5f5f" ><g fill="none" stroke="#5f5f5f" stroke-width="1.1" stroke-linejoin="round"><path d="M0.6 1.6 H3.6 L5.2 0.8 Q6.4 0.3 7.6 1 L8.2 1.4"/><path d="M17.4 1.6 H14.4 L12.8 0.8 Q11.2 0.1 9.6 0.9 L5.6 3.4 Q4.8 4 5.6 4.8 Q6.4 5.4 7.2 4.8 L9.4 3.4 L13.6 7.6 H17.4"/><path d="M0.6 7.6 H2.4 L5.6 10.2 Q6.4 10.8 7.4 10.2 L8.4 10.4 Q9.4 10.6 10 9.6 L13.4 7.2"/></g><rect x="0" y="1" width="1.4" height="7.4" fill="#5f5f5f"/><rect x="16.6" y="1" width="1.4" height="7.4" fill="#5f5f5f"/></svg>
<div style="position:absolute;left:830px;top:532px;width:34px;height:20px;border:1px solid #1e9fff;border-radius:2px;color:#1e9fff;font-size:12px;line-height:21px;text-align:center;white-space:nowrap">菜单</div>
<div style="position:absolute;left:1003px;top:532px;width:36px;height:22px;background:#16baaa;border-radius:2px;color:#fff;font-size:12px;line-height:23px;text-align:center;white-space:nowrap">启用</div>
<div style="position:absolute;left:1191px;top:535px;font-size:14px;line-height:16px;color:#5f5f5f;font-weight:normal;white-space:nowrap;">0</div>
<div style="position:absolute;left:1489px;top:535px;font-size:14px;line-height:16px;color:#5f5f5f;font-weight:normal;white-space:nowrap;">2025-10-10 19:15:34</div>
<div style="position:absolute;left:1660px;top:529px;width:64px;height:28px;border:1px solid #d2d2d2;border-radius:2px;background:#fff"></div>
<svg style="position:absolute;left:1675px;top:538.5px" width="11.5" height="11.5" viewBox="0 0 12 12" fill="#5f5f5f" ><rect x="0" y="5.2" width="12" height="1.6" fill="#5f5f5f"/><rect x="5.2" y="0" width="1.6" height="12" fill="#5f5f5f"/></svg>
<div style="position:absolute;left:1690.5px;top:538px;font-size:12px;line-height:14px;color:#5f5f5f;font-weight:normal;white-space:nowrap;-webkit-text-stroke:0.2px currentColor;">新增</div>
<div style="position:absolute;left:1736px;top:529px;width:66px;height:30px;background:#1e9fff;border-radius:2px"></div>
<svg style="position:absolute;left:1752px;top:539.2px" width="11" height="11" viewBox="0 0 11 11" fill="#fff" ><path d="M0 11 L0.6 8.2 L7.6 1.2 L9.8 3.4 L2.8 10.4Z" fill="#fff"/><path d="M8.4 0.4 Q8.8 0 9.2 0.4 L10.6 1.8 Q11 2.2 10.6 2.6 L10.4 2.8 L8.2 0.6Z" fill="#fff"/></svg>
<div style="position:absolute;left:1767px;top:538px;font-size:12px;line-height:14px;color:#fff;font-weight:normal;white-space:nowrap;-webkit-text-stroke:0.2px currentColor;">修改</div>
<div style="position:absolute;left:1812px;top:529px;width:66px;height:30px;background:#ff5722;border-radius:2px"></div>
<svg style="position:absolute;left:1827px;top:538.8px" width="12" height="11" viewBox="0 0 12 11" fill="#fff" ><rect x="0.2" y="0.9" width="11.4" height="2.6" rx="1.2" fill="#fff"/><rect x="4" y="0.4" width="3.8" height="1" rx="0.5" fill="#fff"/><path d="M1.85 3.2 V10.05 H9.95 V3.2" fill="none" stroke="#fff" stroke-width="1.15"/><rect x="4.1" y="4.4" width="0.85" height="5" fill="#fff" opacity="0.85"/><rect x="6.75" y="4.4" width="0.85" height="5" fill="#fff" opacity="0.85"/></svg>
<div style="position:absolute;left:1842.5px;top:538.5px;font-size:12px;line-height:14px;color:#fff;font-weight:normal;white-space:nowrap;-webkit-text-stroke:0.2px currentColor;">删除</div>
<div style="position:absolute;left:292.7px;top:574px;font-size:14px;line-height:16px;color:#5f5f5f;font-weight:normal;white-space:nowrap;">50</div>
<svg style="position:absolute;left:455px;top:577.5px" width="8" height="11" viewBox="0 0 8 11"><path d="M0 0 L7.5 5.5 L0 11Z" fill="#5f5f5f"/></svg>
<div style="position:absolute;left:469px;top:574px;font-size:14px;line-height:16px;color:#5f5f5f;font-weight:normal;white-space:nowrap;-webkit-text-stroke:0.2px currentColor;">面试计划</div>
<svg style="position:absolute;left:670px;top:574.5px" width="10" height="14" viewBox="0 0 10 14" fill="#5f5f5f" ><path d="M1.2 1.6 H2.8 Q3.2 0 5 0 Q6.8 0 7.2 1.6 H8.8 Q10 1.6 10 2.8 V12.8 Q10 14 8.8 14 H1.2 Q0 14 0 12.8 V2.8 Q0 1.6 1.2 1.6Z" fill="#5f5f5f"/><circle cx="5" cy="2" r="0.9" fill="#fff"/><path d="M3.3 6.4 Q3.3 4.6 5 4.6 Q6.8 4.6 6.8 6.2 Q6.8 7.2 5.7 7.7 Q5.2 8 5.2 9" fill="none" stroke="#fff" stroke-width="1.3"/><rect x="4.4" y="10.2" width="1.5" height="1.5" fill="#fff"/></svg>
<div style="position:absolute;left:830px;top:571px;width:34px;height:20px;border:1px solid #1e9fff;border-radius:2px;color:#1e9fff;font-size:12px;line-height:21px;text-align:center;white-space:nowrap">菜单</div>
<div style="position:absolute;left:1003px;top:571px;width:36px;height:22px;background:#16baaa;border-radius:2px;color:#fff;font-size:12px;line-height:23px;text-align:center;white-space:nowrap">启用</div>
<div style="position:absolute;left:1191px;top:574px;font-size:14px;line-height:16px;color:#5f5f5f;font-weight:normal;white-space:nowrap;">0</div>
<div style="position:absolute;left:1489px;top:574px;font-size:14px;line-height:16px;color:#5f5f5f;font-weight:normal;white-space:nowrap;">2025-10-10 19:15:34</div>
<div style="position:absolute;left:1660px;top:568px;width:64px;height:28px;border:1px solid #d2d2d2;border-radius:2px;background:#fff"></div>
<svg style="position:absolute;left:1675px;top:577.5px" width="11.5" height="11.5" viewBox="0 0 12 12" fill="#5f5f5f" ><rect x="0" y="5.2" width="12" height="1.6" fill="#5f5f5f"/><rect x="5.2" y="0" width="1.6" height="12" fill="#5f5f5f"/></svg>
<div style="position:absolute;left:1690.5px;top:577px;font-size:12px;line-height:14px;color:#5f5f5f;font-weight:normal;white-space:nowrap;-webkit-text-stroke:0.2px currentColor;">新增</div>
<div style="position:absolute;left:1736px;top:568px;width:66px;height:30px;background:#1e9fff;border-radius:2px"></div>
<svg style="position:absolute;left:1752px;top:578.2px" width="11" height="11" viewBox="0 0 11 11" fill="#fff" ><path d="M0 11 L0.6 8.2 L7.6 1.2 L9.8 3.4 L2.8 10.4Z" fill="#fff"/><path d="M8.4 0.4 Q8.8 0 9.2 0.4 L10.6 1.8 Q11 2.2 10.6 2.6 L10.4 2.8 L8.2 0.6Z" fill="#fff"/></svg>
<div style="position:absolute;left:1767px;top:577px;font-size:12px;line-height:14px;color:#fff;font-weight:normal;white-space:nowrap;-webkit-text-stroke:0.2px currentColor;">修改</div>
<div style="position:absolute;left:1812px;top:568px;width:66px;height:30px;background:#ff5722;border-radius:2px"></div>
<svg style="position:absolute;left:1827px;top:577.8px" width="12" height="11" viewBox="0 0 12 11" fill="#fff" ><rect x="0.2" y="0.9" width="11.4" height="2.6" rx="1.2" fill="#fff"/><rect x="4" y="0.4" width="3.8" height="1" rx="0.5" fill="#fff"/><path d="M1.85 3.2 V10.05 H9.95 V3.2" fill="none" stroke="#fff" stroke-width="1.15"/><rect x="4.1" y="4.4" width="0.85" height="5" fill="#fff" opacity="0.85"/><rect x="6.75" y="4.4" width="0.85" height="5" fill="#fff" opacity="0.85"/></svg>
<div style="position:absolute;left:1842.5px;top:577.5px;font-size:12px;line-height:14px;color:#fff;font-weight:normal;white-space:nowrap;-webkit-text-stroke:0.2px currentColor;">删除</div>
<div style="position:absolute;left:292.7px;top:613px;font-size:14px;line-height:16px;color:#5f5f5f;font-weight:normal;white-space:nowrap;">60</div>
<svg style="position:absolute;left:455px;top:616.5px" width="8" height="11" viewBox="0 0 8 11"><path d="M0 0 L7.5 5.5 L0 11Z" fill="#5f5f5f"/></svg>
<div style="position:absolute;left:469px;top:613px;font-size:14px;line-height:16px;color:#5f5f5f;font-weight:normal;white-space:nowrap;-webkit-text-stroke:0.2px currentColor;">培训管理</div>
<svg style="position:absolute;left:666px;top:614px" width="18" height="12.5" viewBox="0 0 18 12.5" fill="#5f5f5f" ><path d="M9 0 L18 3.6 L9 7.2 L0 3.6Z" fill="#5f5f5f"/><path d="M9 2.8 L2.2 4.6" stroke="#fff" stroke-width="0.9"/><path d="M3.8 6.2 L9 8.2 L14.2 6.2 V10 Q14.2 12 9 12 Q3.8 12 3.8 10Z" fill="#5f5f5f"/><rect x="1.6" y="4.2" width="1" height="7.4" fill="#5f5f5f"/><path d="M0.8 11.6 Q2.1 9.6 3.4 11.6Z" fill="#5f5f5f"/></svg>
<div style="position:absolute;left:830px;top:610px;width:34px;height:20px;border:1px solid #1e9fff;border-radius:2px;color:#1e9fff;font-size:12px;line-height:21px;text-align:center;white-space:nowrap">菜单</div>
<div style="position:absolute;left:1003px;top:610px;width:36px;height:22px;background:#16baaa;border-radius:2px;color:#fff;font-size:12px;line-height:23px;text-align:center;white-space:nowrap">启用</div>
<div style="position:absolute;left:1191px;top:613px;font-size:14px;line-height:16px;color:#5f5f5f;font-weight:normal;white-space:nowrap;">0</div>
<div style="position:absolute;left:1489px;top:613px;font-size:14px;line-height:16px;color:#5f5f5f;font-weight:normal;white-space:nowrap;">2025-10-10 19:15:34</div>
<div style="position:absolute;left:1660px;top:607px;width:64px;height:28px;border:1px solid #d2d2d2;border-radius:2px;background:#fff"></div>
<svg style="position:absolute;left:1675px;top:616.5px" width="11.5" height="11.5" viewBox="0 0 12 12" fill="#5f5f5f" ><rect x="0" y="5.2" width="12" height="1.6" fill="#5f5f5f"/><rect x="5.2" y="0" width="1.6" height="12" fill="#5f5f5f"/></svg>
<div style="position:absolute;left:1690.5px;top:616px;font-size:12px;line-height:14px;color:#5f5f5f;font-weight:normal;white-space:nowrap;-webkit-text-stroke:0.2px currentColor;">新增</div>
<div style="position:absolute;left:1736px;top:607px;width:66px;height:30px;background:#1e9fff;border-radius:2px"></div>
<svg style="position:absolute;left:1752px;top:617.2px" width="11" height="11" viewBox="0 0 11 11" fill="#fff" ><path d="M0 11 L0.6 8.2 L7.6 1.2 L9.8 3.4 L2.8 10.4Z" fill="#fff"/><path d="M8.4 0.4 Q8.8 0 9.2 0.4 L10.6 1.8 Q11 2.2 10.6 2.6 L10.4 2.8 L8.2 0.6Z" fill="#fff"/></svg>
<div style="position:absolute;left:1767px;top:616px;font-size:12px;line-height:14px;color:#fff;font-weight:normal;white-space:nowrap;-webkit-text-stroke:0.2px currentColor;">修改</div>
<div style="position:absolute;left:1812px;top:607px;width:66px;height:30px;background:#ff5722;border-radius:2px"></div>
<svg style="position:absolute;left:1827px;top:616.8px" width="12" height="11" viewBox="0 0 12 11" fill="#fff" ><rect x="0.2" y="0.9" width="11.4" height="2.6" rx="1.2" fill="#fff"/><rect x="4" y="0.4" width="3.8" height="1" rx="0.5" fill="#fff"/><path d="M1.85 3.2 V10.05 H9.95 V3.2" fill="none" stroke="#fff" stroke-width="1.15"/><rect x="4.1" y="4.4" width="0.85" height="5" fill="#fff" opacity="0.85"/><rect x="6.75" y="4.4" width="0.85" height="5" fill="#fff" opacity="0.85"/></svg>
<div style="position:absolute;left:1842.5px;top:616.5px;font-size:12px;line-height:14px;color:#fff;font-weight:normal;white-space:nowrap;-webkit-text-stroke:0.2px currentColor;">删除</div>
<div style="position:absolute;left:292.7px;top:652px;font-size:14px;line-height:16px;color:#5f5f5f;font-weight:normal;white-space:nowrap;">70</div>
<div style="position:absolute;left:469px;top:652px;font-size:14px;line-height:16px;color:#5f5f5f;font-weight:normal;white-space:nowrap;-webkit-text-stroke:0.2px currentColor;">数据统计</div>
<svg style="position:absolute;left:669px;top:654px" width="12" height="12" viewBox="0 0 12 12" fill="#5f5f5f" ><rect x="0" y="0" width="12" height="12" rx="1.3" fill="#5f5f5f"/><rect x="2.7" y="5.2" width="1.3" height="4" fill="#fff"/><rect x="5.4" y="2.6" width="1.3" height="6.6" fill="#fff"/><rect x="8" y="7" width="1.3" height="2.2" fill="#fff"/></svg>
<div style="position:absolute;left:830px;top:649px;width:34px;height:20px;border:1px solid #1e9fff;border-radius:2px;color:#1e9fff;font-size:12px;line-height:21px;text-align:center;white-space:nowrap">菜单</div>
<div style="position:absolute;left:1003px;top:649px;width:36px;height:22px;background:#16baaa;border-radius:2px;color:#fff;font-size:12px;line-height:23px;text-align:center;white-space:nowrap">启用</div>
<div style="position:absolute;left:1191px;top:652px;font-size:14px;line-height:16px;color:#5f5f5f;font-weight:normal;white-space:nowrap;">0</div>
<div style="position:absolute;left:1489px;top:652px;font-size:14px;line-height:16px;color:#5f5f5f;font-weight:normal;white-space:nowrap;">2025-10-10 19:15:34</div>
<div style="position:absolute;left:1660px;top:646px;width:64px;height:28px;border:1px solid #d2d2d2;border-radius:2px;background:#fff"></div>
<svg style="position:absolute;left:1675px;top:655.5px" width="11.5" height="11.5" viewBox="0 0 12 12" fill="#5f5f5f" ><rect x="0" y="5.2" width="12" height="1.6" fill="#5f5f5f"/><rect x="5.2" y="0" width="1.6" height="12" fill="#5f5f5f"/></svg>
<div style="position:absolute;left:1690.5px;top:655px;font-size:12px;line-height:14px;color:#5f5f5f;font-weight:normal;white-space:nowrap;-webkit-text-stroke:0.2px currentColor;">新增</div>
<div style="position:absolute;left:1736px;top:646px;width:66px;height:30px;background:#1e9fff;border-radius:2px"></div>
<svg style="position:absolute;left:1752px;top:656.2px" width="11" height="11" viewBox="0 0 11 11" fill="#fff" ><path d="M0 11 L0.6 8.2 L7.6 1.2 L9.8 3.4 L2.8 10.4Z" fill="#fff"/><path d="M8.4 0.4 Q8.8 0 9.2 0.4 L10.6 1.8 Q11 2.2 10.6 2.6 L10.4 2.8 L8.2 0.6Z" fill="#fff"/></svg>
<div style="position:absolute;left:1767px;top:655px;font-size:12px;line-height:14px;color:#fff;font-weight:normal;white-space:nowrap;-webkit-text-stroke:0.2px currentColor;">修改</div>
<div style="position:absolute;left:1812px;top:646px;width:66px;height:30px;background:#ff5722;border-radius:2px"></div>
<svg style="position:absolute;left:1827px;top:655.8px" width="12" height="11" viewBox="0 0 12 11" fill="#fff" ><rect x="0.2" y="0.9" width="11.4" height="2.6" rx="1.2" fill="#fff"/><rect x="4" y="0.4" width="3.8" height="1" rx="0.5" fill="#fff"/><path d="M1.85 3.2 V10.05 H9.95 V3.2" fill="none" stroke="#fff" stroke-width="1.15"/><rect x="4.1" y="4.4" width="0.85" height="5" fill="#fff" opacity="0.85"/><rect x="6.75" y="4.4" width="0.85" height="5" fill="#fff" opacity="0.85"/></svg>
<div style="position:absolute;left:1842.5px;top:655.5px;font-size:12px;line-height:14px;color:#fff;font-weight:normal;white-space:nowrap;-webkit-text-stroke:0.2px currentColor;">删除</div>
<div style="position:absolute;left:292.7px;top:691px;font-size:14px;line-height:16px;color:#5f5f5f;font-weight:normal;white-space:nowrap;">72</div>
<svg style="position:absolute;left:455px;top:694.5px" width="8" height="11" viewBox="0 0 8 11"><path d="M0 0 L7.5 5.5 L0 11Z" fill="#5f5f5f"/></svg>
<div style="position:absolute;left:469px;top:691px;font-size:14px;line-height:16px;color:#5f5f5f;font-weight:normal;white-space:nowrap;-webkit-text-stroke:0.2px currentColor;">用户管理</div>
<svg style="position:absolute;left:669px;top:692px" width="12" height="14" viewBox="0 0 12 14" fill="#5f5f5f" ><circle cx="6" cy="3.4" r="3.4" fill="#5f5f5f"/><path d="M0 13.2 Q0 8.2 4.2 8.2 H7.8 Q12 8.2 12 13.2 Q12 14 11.2 14 H0.8 Q0 14 0 13.2Z" fill="#5f5f5f"/></svg>
<div style="position:absolute;left:830px;top:688px;width:34px;height:20px;border:1px solid #1e9fff;border-radius:2px;color:#1e9fff;font-size:12px;line-height:21px;text-align:center;white-space:nowrap">菜单</div>
<div style="position:absolute;left:1003px;top:688px;width:36px;height:22px;background:#16baaa;border-radius:2px;color:#fff;font-size:12px;line-height:23px;text-align:center;white-space:nowrap">启用</div>
<div style="position:absolute;left:1191px;top:691px;font-size:14px;line-height:16px;color:#5f5f5f;font-weight:normal;white-space:nowrap;">0</div>
<div style="position:absolute;left:1489px;top:691px;font-size:14px;line-height:16px;color:#5f5f5f;font-weight:normal;white-space:nowrap;">2025-10-10 19:15:34</div>
<div style="position:absolute;left:1660px;top:685px;width:64px;height:28px;border:1px solid #d2d2d2;border-radius:2px;background:#fff"></div>
<svg style="position:absolute;left:1675px;top:694.5px" width="11.5" height="11.5" viewBox="0 0 12 12" fill="#5f5f5f" ><rect x="0" y="5.2" width="12" height="1.6" fill="#5f5f5f"/><rect x="5.2" y="0" width="1.6" height="12" fill="#5f5f5f"/></svg>
<div style="position:absolute;left:1690.5px;top:694px;font-size:12px;line-height:14px;color:#5f5f5f;font-weight:normal;white-space:nowrap;-webkit-text-stroke:0.2px currentColor;">新增</div>
<div style="position:absolute;left:1736px;top:685px;width:66px;height:30px;background:#1e9fff;border-radius:2px"></div>
<svg style="position:absolute;left:1752px;top:695.2px" width="11" height="11" viewBox="0 0 11 11" fill="#fff" ><path d="M0 11 L0.6 8.2 L7.6 1.2 L9.8 3.4 L2.8 10.4Z" fill="#fff"/><path d="M8.4 0.4 Q8.8 0 9.2 0.4 L10.6 1.8 Q11 2.2 10.6 2.6 L10.4 2.8 L8.2 0.6Z" fill="#fff"/></svg>
<div style="position:absolute;left:1767px;top:694px;font-size:12px;line-height:14px;color:#fff;font-weight:normal;white-space:nowrap;-webkit-text-stroke:0.2px currentColor;">修改</div>
<div style="position:absolute;left:1812px;top:685px;width:66px;height:30px;background:#ff5722;border-radius:2px"></div>
<svg style="position:absolute;left:1827px;top:694.8px" width="12" height="11" viewBox="0 0 12 11" fill="#fff" ><rect x="0.2" y="0.9" width="11.4" height="2.6" rx="1.2" fill="#fff"/><rect x="4" y="0.4" width="3.8" height="1" rx="0.5" fill="#fff"/><path d="M1.85 3.2 V10.05 H9.95 V3.2" fill="none" stroke="#fff" stroke-width="1.15"/><rect x="4.1" y="4.4" width="0.85" height="5" fill="#fff" opacity="0.85"/><rect x="6.75" y="4.4" width="0.85" height="5" fill="#fff" opacity="0.85"/></svg>
<div style="position:absolute;left:1842.5px;top:694.5px;font-size:12px;line-height:14px;color:#fff;font-weight:normal;white-space:nowrap;-webkit-text-stroke:0.2px currentColor;">删除</div>
<div style="position:absolute;left:292.7px;top:730px;font-size:14px;line-height:16px;color:#5f5f5f;font-weight:normal;white-space:nowrap;">80</div>
<svg style="position:absolute;left:455px;top:733.5px" width="8" height="11" viewBox="0 0 8 11"><path d="M0 0 L7.5 5.5 L0 11Z" fill="#5f5f5f"/></svg>
<div style="position:absolute;left:469px;top:730px;font-size:14px;line-height:16px;color:#5f5f5f;font-weight:normal;white-space:nowrap;-webkit-text-stroke:0.2px currentColor;">公告管理</div>
<svg style="position:absolute;left:666px;top:731px" width="18" height="12.5" viewBox="0 0 18 12.5" fill="#5f5f5f" ><path d="M0 4 Q0 3.5 0.5 3.5 H3.5 L8 0 Q9 -0.3 9 0.8 V11.7 Q9 12.8 8 12.5 L3.5 9 H0.5 Q0 9 0 8.5Z" fill="#5f5f5f"/><path d="M11 4.2 Q12.6 6.25 11 8.3" fill="none" stroke="#5f5f5f" stroke-width="1.3" stroke-linecap="round"/><path d="M13 2.4 Q15.8 6.25 13 10.1" fill="none" stroke="#5f5f5f" stroke-width="1.3" stroke-linecap="round"/><path d="M15 0.6 Q19 6.25 15 11.9" fill="none" stroke="#5f5f5f" stroke-width="1.3" stroke-linecap="round"/></svg>
<div style="position:absolute;left:830px;top:727px;width:34px;height:20px;border:1px solid #1e9fff;border-radius:2px;color:#1e9fff;font-size:12px;line-height:21px;text-align:center;white-space:nowrap">菜单</div>
<div style="position:absolute;left:1003px;top:727px;width:36px;height:22px;background:#16baaa;border-radius:2px;color:#fff;font-size:12px;line-height:23px;text-align:center;white-space:nowrap">启用</div>
<div style="position:absolute;left:1191px;top:730px;font-size:14px;line-height:16px;color:#5f5f5f;font-weight:normal;white-space:nowrap;">0</div>
<div style="position:absolute;left:1489px;top:730px;font-size:14px;line-height:16px;color:#5f5f5f;font-weight:normal;white-space:nowrap;">2025-10-10 19:15:34</div>
<div style="position:absolute;left:1660px;top:724px;width:64px;height:28px;border:1px solid #d2d2d2;border-radius:2px;background:#fff"></div>
<svg style="position:absolute;left:1675px;top:733.5px" width="11.5" height="11.5" viewBox="0 0 12 12" fill="#5f5f5f" ><rect x="0" y="5.2" width="12" height="1.6" fill="#5f5f5f"/><rect x="5.2" y="0" width="1.6" height="12" fill="#5f5f5f"/></svg>
<div style="position:absolute;left:1690.5px;top:733px;font-size:12px;line-height:14px;color:#5f5f5f;font-weight:normal;white-space:nowrap;-webkit-text-stroke:0.2px currentColor;">新增</div>
<div style="position:absolute;left:1736px;top:724px;width:66px;height:30px;background:#1e9fff;border-radius:2px"></div>
<svg style="position:absolute;left:1752px;top:734.2px" width="11" height="11" viewBox="0 0 11 11" fill="#fff" ><path d="M0 11 L0.6 8.2 L7.6 1.2 L9.8 3.4 L2.8 10.4Z" fill="#fff"/><path d="M8.4 0.4 Q8.8 0 9.2 0.4 L10.6 1.8 Q11 2.2 10.6 2.6 L10.4 2.8 L8.2 0.6Z" fill="#fff"/></svg>
<div style="position:absolute;left:1767px;top:733px;font-size:12px;line-height:14px;color:#fff;font-weight:normal;white-space:nowrap;-webkit-text-stroke:0.2px currentColor;">修改</div>
<div style="position:absolute;left:1812px;top:724px;width:66px;height:30px;background:#ff5722;border-radius:2px"></div>
<svg style="position:absolute;left:1827px;top:733.8px" width="12" height="11" viewBox="0 0 12 11" fill="#fff" ><rect x="0.2" y="0.9" width="11.4" height="2.6" rx="1.2" fill="#fff"/><rect x="4" y="0.4" width="3.8" height="1" rx="0.5" fill="#fff"/><path d="M1.85 3.2 V10.05 H9.95 V3.2" fill="none" stroke="#fff" stroke-width="1.15"/><rect x="4.1" y="4.4" width="0.85" height="5" fill="#fff" opacity="0.85"/><rect x="6.75" y="4.4" width="0.85" height="5" fill="#fff" opacity="0.85"/></svg>
<div style="position:absolute;left:1842.5px;top:733.5px;font-size:12px;line-height:14px;color:#fff;font-weight:normal;white-space:nowrap;-webkit-text-stroke:0.2px currentColor;">删除</div>
<div style="position:absolute;left:292.7px;top:769px;font-size:14px;line-height:16px;color:#5f5f5f;font-weight:normal;white-space:nowrap;">90</div>
<svg style="position:absolute;left:455px;top:772.5px" width="8" height="11" viewBox="0 0 8 11"><path d="M0 0 L7.5 5.5 L0 11Z" fill="#5f5f5f"/></svg>
<div style="position:absolute;left:469px;top:769px;font-size:14px;line-height:16px;color:#5f5f5f;font-weight:normal;white-space:nowrap;-webkit-text-stroke:0.2px currentColor;">操作日志</div>
<svg style="position:absolute;left:670px;top:769px" width="11" height="14" viewBox="0 0 11 14" fill="#5f5f5f" ><path d="M1.2 1.6 H3.2 Q3.6 0 5.5 0 Q7.4 0 7.8 1.6 H9.8 Q11 1.6 11 2.8 V12.8 Q11 14 9.8 14 H1.2 Q0 14 0 12.8 V2.8 Q0 1.6 1.2 1.6Z" fill="#5f5f5f"/><circle cx="5.5" cy="1.9" r="0.9" fill="#fff"/><circle cx="5.5" cy="6.4" r="1.9" fill="#fff"/><path d="M2 12.2 Q2 9.4 4.5 9.4 H6.5 Q9 9.4 9 12.2Z" fill="#fff"/></svg>
<div style="position:absolute;left:830px;top:766px;width:34px;height:20px;border:1px solid #1e9fff;border-radius:2px;color:#1e9fff;font-size:12px;line-height:21px;text-align:center;white-space:nowrap">菜单</div>
<div style="position:absolute;left:1003px;top:766px;width:36px;height:22px;background:#16baaa;border-radius:2px;color:#fff;font-size:12px;line-height:23px;text-align:center;white-space:nowrap">启用</div>
<div style="position:absolute;left:1191px;top:769px;font-size:14px;line-height:16px;color:#5f5f5f;font-weight:normal;white-space:nowrap;">0</div>
<div style="position:absolute;left:1489px;top:769px;font-size:14px;line-height:16px;color:#5f5f5f;font-weight:normal;white-space:nowrap;">2025-10-10 19:15:34</div>
<div style="position:absolute;left:1660px;top:763px;width:64px;height:28px;border:1px solid #d2d2d2;border-radius:2px;background:#fff"></div>
<svg style="position:absolute;left:1675px;top:772.5px" width="11.5" height="11.5" viewBox="0 0 12 12" fill="#5f5f5f" ><rect x="0" y="5.2" width="12" height="1.6" fill="#5f5f5f"/><rect x="5.2" y="0" width="1.6" height="12" fill="#5f5f5f"/></svg>
<div style="position:absolute;left:1690.5px;top:772px;font-size:12px;line-height:14px;color:#5f5f5f;font-weight:normal;white-space:nowrap;-webkit-text-stroke:0.2px currentColor;">新增</div>
<div style="position:absolute;left:1736px;top:763px;width:66px;height:30px;background:#1e9fff;border-radius:2px"></div>
<svg style="position:absolute;left:1752px;top:773.2px" width="11" height="11" viewBox="0 0 11 11" fill="#fff" ><path d="M0 11 L0.6 8.2 L7.6 1.2 L9.8 3.4 L2.8 10.4Z" fill="#fff"/><path d="M8.4 0.4 Q8.8 0 9.2 0.4 L10.6 1.8 Q11 2.2 10.6 2.6 L10.4 2.8 L8.2 0.6Z" fill="#fff"/></svg>
<div style="position:absolute;left:1767px;top:772px;font-size:12px;line-height:14px;color:#fff;font-weight:normal;white-space:nowrap;-webkit-text-stroke:0.2px currentColor;">修改</div>
<div style="position:absolute;left:1812px;top:763px;width:66px;height:30px;background:#ff5722;border-radius:2px"></div>
<svg style="position:absolute;left:1827px;top:772.8px" width="12" height="11" viewBox="0 0 12 11" fill="#fff" ><rect x="0.2" y="0.9" width="11.4" height="2.6" rx="1.2" fill="#fff"/><rect x="4" y="0.4" width="3.8" height="1" rx="0.5" fill="#fff"/><path d="M1.85 3.2 V10.05 H9.95 V3.2" fill="none" stroke="#fff" stroke-width="1.15"/><rect x="4.1" y="4.4" width="0.85" height="5" fill="#fff" opacity="0.85"/><rect x="6.75" y="4.4" width="0.85" height="5" fill="#fff" opacity="0.85"/></svg>
<div style="position:absolute;left:1842.5px;top:772.5px;font-size:12px;line-height:14px;color:#fff;font-weight:normal;white-space:nowrap;-webkit-text-stroke:0.2px currentColor;">删除</div>
<svg style="position:absolute;left:236px;top:811px" width="9" height="12" viewBox="0 0 9 12"><path d="M8 0.5 L2 6 L8 11.5" fill="none" stroke="#d2d2d2" stroke-width="1.2"/></svg>
<div style="position:absolute;left:259px;top:804px;width:31px;height:26px;background:#16baaa;border-radius:2px"></div>
<div style="position:absolute;left:271.5px;top:809px;font-size:12px;line-height:16px;color:#fff;font-weight:normal;white-space:nowrap;">1</div>
<svg style="position:absolute;left:304px;top:811px" width="9" height="12" viewBox="0 0 9 12"><path d="M1 0.5 L7 6 L1 11.5" fill="none" stroke="#bbb" stroke-width="1.2"/></svg>
<div style="position:absolute;left:328px;top:809px;font-size:12px;line-height:16px;color:#999;font-weight:normal;white-space:nowrap;-webkit-text-stroke:0.2px currentColor;">到第</div>
<div style="position:absolute;left:362px;top:804px;width:38px;height:24px;border:1px solid #eee;background:#fff;border-radius:2px"></div>
<div style="position:absolute;left:378px;top:809px;font-size:12px;line-height:16px;color:#333;font-weight:normal;white-space:nowrap;">1</div>
<div style="position:absolute;left:411.5px;top:809px;font-size:12px;line-height:16px;color:#999;font-weight:normal;white-space:nowrap;-webkit-text-stroke:0.2px currentColor;">页</div>
<div style="position:absolute;left:434px;top:804px;width:44px;height:24px;border:1px solid #eee;background:#fff;border-radius:2px"></div>
<div style="position:absolute;left:444.5px;top:810px;font-size:12px;line-height:16px;color:#000;font-weight:normal;white-space:nowrap;-webkit-text-stroke:0.2px currentColor;">确定</div>
<div style="position:absolute;left:489px;top:809px;font-size:12px;line-height:16px;color:#333;font-weight:normal;white-space:nowrap;-webkit-text-stroke:0.2px currentColor;">共 14 条</div>
<div style="position:absolute;left:544px;top:804px;width:79px;height:24px;border:1px solid #eee;background:#fff;border-radius:2px"></div>
<div style="position:absolute;left:551.5px;top:809px;font-size:12px;line-height:16px;color:#000;font-weight:normal;white-space:nowrap;-webkit-text-stroke:0.2px currentColor;">20 条/页</div>
<svg style="position:absolute;left:611px;top:814px" width="10" height="7" viewBox="0 0 10 7"><path d="M1 1 L5 5 L9 1" fill="none" stroke="#000" stroke-width="2"/></svg></body></html>
